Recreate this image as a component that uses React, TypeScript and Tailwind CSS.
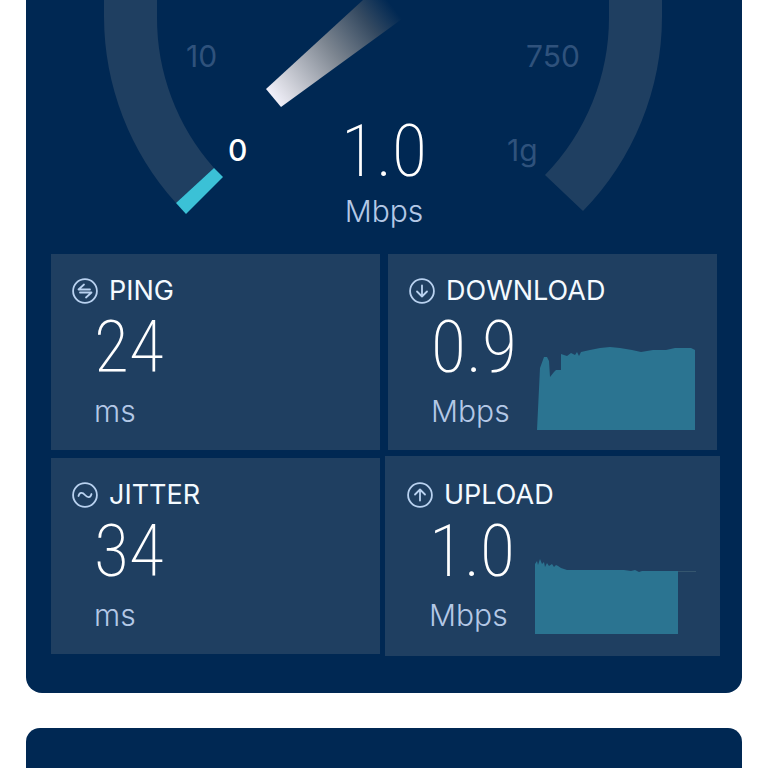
import type { ReactNode } from "react";

const numberFont = "font-['Roboto_Condensed',Roboto,sans-serif]";

function CircleIcon({ children }: { children: ReactNode }) {
  return (
    <svg
      viewBox="0 0 26 26"
      className="h-[26px] w-[26px] shrink-0"
      fill="none"
      stroke="#b9d2f0"
      strokeWidth="1.8"
      strokeLinecap="round"
      strokeLinejoin="round"
      aria-hidden="true"
    >
      <circle cx="13" cy="13" r="11.9" />
      {children}
    </svg>
  );
}

type MetricProps = {
  title: string;
  value: string;
  unit: string;
  icon: ReactNode;
  chart?: ReactNode;
  raised?: boolean;
};

function Metric({ title, value, unit, icon, chart, raised }: MetricProps) {
  return (
    <article
      className={`bg-[#1f3f61] ${
        raised ? "-mx-[3px] -my-[2px] pt-[26px] pr-[23px] pb-[22px] pl-[22px]" : "px-[21px] pt-6 pb-5"
      }`}
    >
      <h2 className="flex items-center gap-[11px] text-[27px] leading-[26px] font-normal text-[#f4faff]">
        <CircleIcon>{icon}</CircleIcon>
        {title}
      </h2>
      <div className="flex items-end justify-between">
        <p className="pl-[22px]">
          <span className={`block text-[72px] leading-[88px] font-extralight text-white ${numberFont}`}>
            {value}
          </span>
          <span className="block text-[30px] leading-[38px] font-light text-[#b4c8e6]">{unit}</span>
        </p>
        {chart}
      </div>
    </article>
  );
}

function Gauge() {
  return (
    <section className="grid">
      <svg
        viewBox="26 0 716 254"
        className="col-start-1 row-start-1 block w-full"
        aria-label="Speed gauge"
      >
        <defs>
          <linearGradient id="needle" gradientUnits="userSpaceOnUse" x1="273" y1="98" x2="392" y2="6">
            <stop offset="0" stopColor="#f1f0fa" />
            <stop offset="0.12" stopColor="#d6d7df" />
            <stop offset="0.5" stopColor="#7c8590" />
            <stop offset="0.8" stopColor="#354a61" />
            <stop offset="1" stopColor="#002853" />
          </linearGradient>
        </defs>
        <path
          d="M104 0V17A279 279 0 0 0 176 203L214 168A226 226 0 0 1 157 17V0Z"
          fill="#1f3f61"
        />
        <path d="M662 0V17A279 279 0 0 1 583 211L545 175A226 226 0 0 0 609 17V0Z" fill="#1f3f61" />
        <path d="M176 203L214 168L223 177L186 214Z" fill="#3bc1d6" />
        <path d="M266 89L363 0H428L281 107Z" fill="url(#needle)" />
        <g fontSize="30" fill="#2f527c">
          <text x="186" y="67">10</text>
          <text x="526" y="67">750</text>
          <text x="507" y="161">1g</text>
        </g>
        <text x="228" y="161" fontSize="30" fontWeight="500" fill="#ffffff">0</text>
      </svg>
      <p className="col-start-1 row-start-1 self-end pb-6 text-center">
        <span className={`block text-[72px] leading-[80px] font-extralight text-white ${numberFont}`}>
          1.0
        </span>
        <span className="block text-[30px] leading-[38px] font-light text-[#b4c8e6]">Mbps</span>
      </p>
    </section>
  );
}

const downloadChart = (
  <svg viewBox="0 0 160 84" className="h-[84px] w-40 shrink-0" aria-label="Download history">
    <path
      fill="#2b7491"
      d="M1 84L4 22L8 11H11L13 15L14 31L18 26L20 24H25V8L31 10L35 7L39 9L41 6L43 10L45 6L54 4L64 2L74 1L84 2L96 4L105 6L117 4L130 4L139 2H155L159 4V84Z"
    />
  </svg>
);

const uploadChart = (
  <svg viewBox="0 0 162 84" className="h-[84px] w-[162px] shrink-0" aria-label="Upload history">
    <path
      fill="#2b7491"
      d="M0 84V14L2 11L3 15L5 9L7 14L9 12L10 17L12 13L14 16L17 14L19 17L21 15L23 16L26 18L32 20H89L96 21L100 20L104 22L107 21H143V84Z"
    />
    <path d="M143 21.5H161" stroke="#35566f" strokeWidth="1" />
  </svg>
);

export default function App() {
  return (
    <main className="bg-white px-[26px] font-[Inter,sans-serif]">
      <div className="rounded-b-[16px] bg-[#002853] pb-[39px]">
        <Gauge />
        <div className="grid grid-cols-2 gap-2 px-[25px]">
          <Metric
            title="PING"
            value="24"
            unit="ms"
            icon={<path d="M12 6.5L6.5 11.5H18M8 14.5H19.5L14 19.5" />}
          />
          <Metric
            title="DOWNLOAD"
            value="0.9"
            unit="Mbps"
            icon={<path d="M13 7.5V18.5M8 13.5L13 18.5L18 13.5" />}
            chart={downloadChart}
          />
          <Metric
            title="JITTER"
            value="34"
            unit="ms"
            icon={<path d="M6.5 14C7.5 10 10.5 10 13 13S18.5 16 19.5 12" />}
          />
          <Metric
            title="UPLOAD"
            value="1.0"
            unit="Mbps"
            icon={<path d="M13 18.5V7.5M8 12.5L13 7.5L18 12.5" />}
            chart={uploadChart}
            raised
          />
        </div>
      </div>
      <div className="mt-[35px] h-10 rounded-t-[14px] bg-[#002853]" />
    </main>
  );
}
